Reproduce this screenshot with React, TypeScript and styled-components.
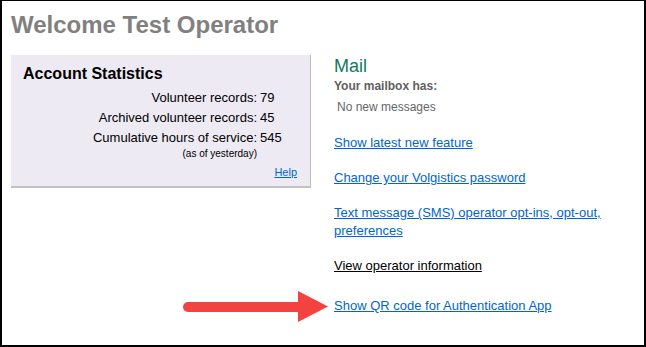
import React from "react";
import styled, { createGlobalStyle } from "styled-components";

const Global = createGlobalStyle`
  html, body { margin: 0; padding: 0; background: #fff; }
  body { font-family: "Liberation Sans", Arial, sans-serif; }
`;

const Frame = styled.div`
  position: relative;
  box-sizing: border-box;
  width: 646px;
  height: 347px;
  border: 2px solid #000;
  border-top-width: 1px;
  padding: 10px 0 0 9px;
  background: #fff;
  overflow: hidden;
`;

const Title = styled.h1`
  margin: 0;
  font-size: 24px;
  line-height: 28px;
  font-weight: bold;
  color: #808080;
`;

const Columns = styled.div`
  display: flex;
  align-items: flex-start;
  gap: 23px;
  margin-top: 16px;
`;

const Panel = styled.section`
  box-sizing: border-box;
  width: 300px;
  flex: none;
  background: #edeaf3;
  border-right: 1px solid #bdbdbd;
  border-bottom: 2px solid #c2c2c2;
  padding: 10px 13px 7px 12px;
  color: #000;
`;

const PanelHeading = styled.h2`
  margin: 0 0 5px;
  font-size: 16px;
  line-height: 18px;
  font-weight: bold;
`;

const StatsGrid = styled.div`
  display: grid;
  grid-template-columns: 234px auto;
  font-size: 13px;
  line-height: 20px;
`;

const StatLabel = styled.div`
  text-align: right;
  white-space: nowrap;
`;

const StatValue = styled.div`
  padding-left: 3px;
  white-space: nowrap;
`;

const Note = styled.div`
  text-align: right;
  font-size: 10px;
  line-height: 12px;
  white-space: nowrap;
`;

const HelpRow = styled.div`
  margin-top: 6px;
  text-align: right;
  font-size: 11px;
  line-height: 13px;
`;

const Link = styled.a<{ $dark?: boolean }>`
  color: ${(p) => (p.$dark ? "#000" : "#0066cc")};
  text-decoration: underline;
  cursor: pointer;
`;

const Side = styled.section`
  flex: 1;
  padding-right: 10px;
  display: flex;
  flex-direction: column;
`;

const MailHeading = styled.h2`
  margin: 1px 0 0;
  font-size: 18px;
  line-height: 20px;
  font-weight: normal;
  color: #0f7a5c;
`;

const MailboxLabel = styled.div`
  margin-top: 3px;
  font-size: 12px;
  line-height: 14px;
  font-weight: bold;
  color: #606060;
`;

const MailboxStatus = styled.div`
  margin-top: 7px;
  padding-left: 3px;
  font-size: 12px;
  line-height: 14px;
  color: #666;
`;

const LinkItem = styled.div<{ $gap: number }>`
  margin-top: ${(p) => p.$gap}px;
  font-size: 13px;
  line-height: 18px;
`;

const Arrow = styled.svg`
  position: absolute;
  left: 176px;
  top: 288px;
  width: 152px;
  height: 34px;
`;

export default function App() {
  return (
    <>
      <Global />
      <Frame>
        <Title>Welcome Test Operator</Title>
        <Columns>
          <Panel>
            <PanelHeading>Account Statistics</PanelHeading>
            <StatsGrid>
              <StatLabel>Volunteer records:</StatLabel>
              <StatValue>79</StatValue>
              <StatLabel>Archived volunteer records:</StatLabel>
              <StatValue>45</StatValue>
              <StatLabel>Cumulative hours of service:</StatLabel>
              <StatValue>545</StatValue>
              <Note>(as of yesterday)</Note>
              <div />
            </StatsGrid>
            <HelpRow>
              <Link>Help</Link>
            </HelpRow>
          </Panel>
          <Side>
            <MailHeading>Mail</MailHeading>
            <MailboxLabel>Your mailbox has:</MailboxLabel>
            <MailboxStatus>No new messages</MailboxStatus>
            <LinkItem $gap={20}>
              <Link>Show latest new feature</Link>
            </LinkItem>
            <LinkItem $gap={17}>
              <Link>Change your Volgistics password</Link>
            </LinkItem>
            <LinkItem $gap={17}>
              <Link>Text message (SMS) operator opt-ins, opt-out, preferences</Link>
            </LinkItem>
            <LinkItem $gap={17}>
              <Link $dark>View operator information</Link>
            </LinkItem>
            <LinkItem $gap={22}>
              <Link>Show QR code for Authentication App</Link>
            </LinkItem>
          </Side>
        </Columns>
        <Arrow viewBox="0 0 152 34">
          <line x1="10" y1="18" x2="122" y2="18" stroke="#f24341" strokeWidth="10" strokeLinecap="round" />
          <polygon points="120,2 150,17.5 120,33" fill="#f24341" />
        </Arrow>
      </Frame>
    </>
  );
}
